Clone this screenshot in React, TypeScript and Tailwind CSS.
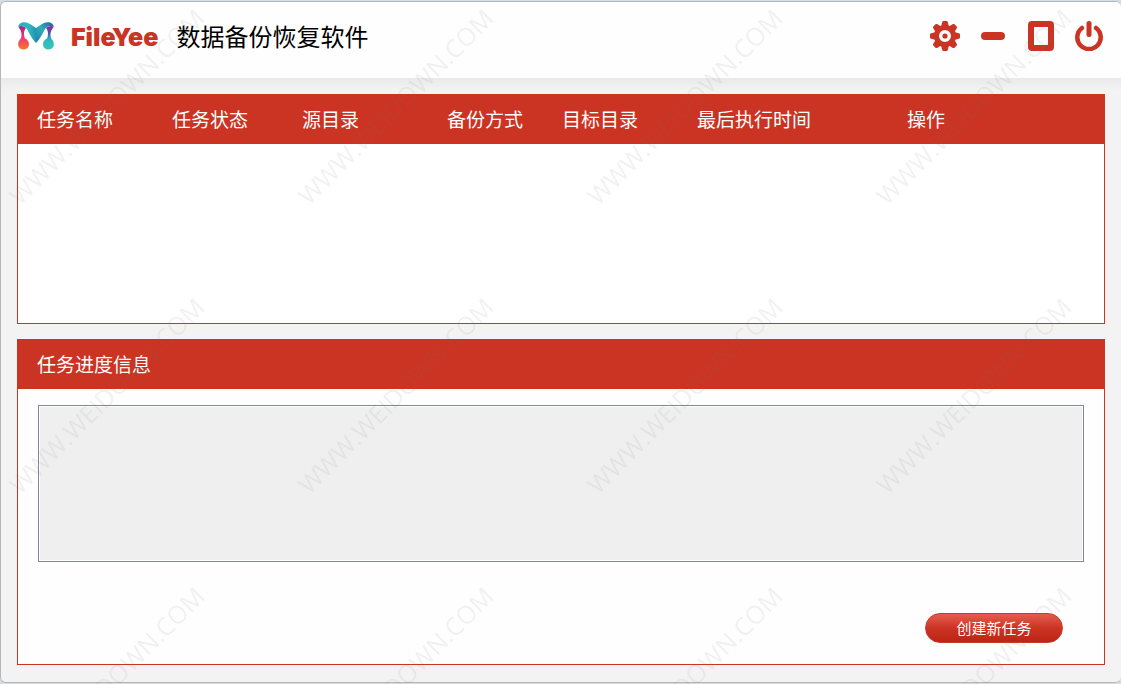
const columns = [
  { label: '任务名称', width: 'w-[135px]' },
  { label: '任务状态', width: 'w-[130px]' },
  { label: '源目录', width: 'w-[145px]' },
  { label: '备份方式', width: 'w-[115px]' },
  { label: '目标目录', width: 'w-[135px]' },
  { label: '最后执行时间', width: 'w-[210px]' },
  { label: '操作', width: '' },
];

function Logo() {
  return (
    <svg width="36" height="28" viewBox="0 0 36 28" aria-hidden="true">
      <defs>
        <linearGradient id="wing" x1="0" y1="0" x2="1" y2="0">
          <stop offset="0" stopColor="#22b3b4" />
          <stop offset="0.6" stopColor="#2cb9bd" />
          <stop offset="1" stopColor="#2793b4" />
        </linearGradient>
        <linearGradient id="fold" x1="0" y1="1" x2="1" y2="0">
          <stop offset="0" stopColor="#2379ad" />
          <stop offset="0.5" stopColor="#2cb0b9" />
          <stop offset="1" stopColor="#2456a4" />
        </linearGradient>
        <linearGradient id="dropLeft" x1="0" y1="0" x2="0" y2="1">
          <stop offset="0" stopColor="#a3228e" />
          <stop offset="0.5" stopColor="#ee3a72" />
          <stop offset="1" stopColor="#f7752b" />
        </linearGradient>
        <linearGradient id="dropRight" x1="0" y1="0" x2="0" y2="1">
          <stop offset="0" stopColor="#a3228e" />
          <stop offset="0.3" stopColor="#3c5ca8" />
          <stop offset="0.6" stopColor="#2cbabd" />
          <stop offset="1" stopColor="#36c6bd" />
        </linearGradient>
      </defs>
      <path d="M0.500 5C2 3 6 4 8 6C5.500 9 5.500 13 7 16.500C13 19 12 27.500 5.500 27.500C-1 27.500-1 20 2.500 17C4.500 13 3.500 9 0.500 5Z" fill="url(#dropLeft)" />
      <path d="M35.500 5C34 3 30 4 28 6C30.500 9 30.500 13 29 16.500C23 19 24 27.500 30.500 27.500C37 27.500 37 20 33.500 17C31.500 13 32.500 9 35.500 5Z" fill="url(#dropRight)" />
      <path d="M0 5C1 0 6-1 11 1.500C14 3 16.500 5 18 6V21C15 18 12 13 9.500 8C7.500 4.500 4 3 0 5Z" fill="url(#wing)" />
      <path d="M36 5C35 0 30-1 25 1.500C22 3 19.500 5 18 6V21C21 18 24 13 26.500 8C28.500 4.500 32 3 36 5Z" fill="url(#fold)" />
    </svg>
  );
}

function GearIcon() {
  return (
    <svg width="30" height="30" viewBox="0 0 30 30" fill="#cb3323" aria-hidden="true">
      {[0, 45, 90, 135, 180, 225, 270, 315].map((angle) => (
        <path key={angle} d="M11 6L12.200 1Q12.500 0 13.500 0H16.500Q17.500 0 17.800 1L19 6Z" transform={`rotate(${angle} 15 15)`} />
      ))}
      <circle cx="15" cy="15" r="8.500" fill="none" stroke="#cb3323" strokeWidth="5" />
      <circle cx="15" cy="15" r="2.600" />
    </svg>
  );
}

function MinimizeIcon() {
  return (
    <svg width="26" height="30" viewBox="0 0 26 30" fill="#cb3323" aria-hidden="true">
      <rect y="11" width="24" height="8" rx="4" />
    </svg>
  );
}

function MaximizeIcon() {
  return (
    <svg width="26" height="30" viewBox="0 0 26 30" aria-hidden="true">
      <path d="M4 0H22Q26 0 26 4V26Q26 30 22 30H4Q0 30 0 26V4Q0 0 4 0ZM6 6V24H20V6Z" fill="#cb3323" fillRule="evenodd" />
    </svg>
  );
}

function PowerIcon() {
  return (
    <svg width="28" height="30" viewBox="0 0 28 30" fill="none" stroke="#cb3323" strokeWidth="4.500" strokeLinecap="round" aria-hidden="true">
      <path d="M7 7A11.700 11.700 0 1 0 21 7" />
      <path d="M14 2.500V13.500" strokeWidth="5" />
    </svg>
  );
}

function Watermark() {
  return (
    <div className="pointer-events-none absolute inset-0 grid auto-rows-[289px] grid-cols-[repeat(4,289px)] overflow-hidden" aria-hidden="true">
      {Array.from({ length: 12 }, (_, i) => (
        <div key={i} className="flex size-[214px] items-center justify-center">
          <span className="-rotate-45 whitespace-nowrap font-['Open_Sans',sans-serif] text-[25px] text-neutral-500/10">
            WWW.WEIDOWN.COM
          </span>
        </div>
      ))}
    </div>
  );
}

export default function App() {
  return (
    <div className="relative flex min-h-screen flex-col overflow-hidden bg-[#d5dde2] pt-px pb-px font-['Noto_Sans_CJK_SC',sans-serif]">
      <div className="flex grow flex-col overflow-hidden rounded-md border border-r-0 border-[#b0b8bd] bg-[#f3f3f3]">
        <header className="flex h-[76px] shrink-0 items-center bg-[#fefefe] pr-[18px] pb-2 pl-[17px]">
          <Logo />
          <h1 className="ml-[17px] flex items-baseline gap-[18px] pt-1">
            <span className="font-['Inter',sans-serif] text-[25px] font-black text-[#cb3323]">
              FileYee
            </span>
            <span className="text-2xl text-black">数据备份恢复软件</span>
          </h1>
          <div className="ml-auto flex items-center gap-[21px]">
            <button type="button" aria-label="设置"><GearIcon /></button>
            <button type="button" aria-label="最小化"><MinimizeIcon /></button>
            <button type="button" aria-label="最大化"><MaximizeIcon /></button>
            <button type="button" aria-label="关闭"><PowerIcon /></button>
          </div>
        </header>

        <main className="flex grow flex-col gap-[15px] bg-linear-to-b from-[#e9e9e9] to-[#f3f3f3] to-[12px] px-4 pt-4 pb-[17px] text-[19px]">
          <section className="h-[230px] shrink-0 border border-[#cb3323] bg-white">
            <table className="w-full table-fixed">
              <thead className="bg-[#cb3323] text-left text-white">
                <tr className="h-[49px]">
                  {columns.map((column) => (
                    <th key={column.label} scope="col" className={`${column.width} pl-[19px] font-normal whitespace-nowrap`}>
                      {column.label}
                    </th>
                  ))}
                </tr>
              </thead>
            </table>
          </section>

          <section className="flex grow flex-col border border-[#cb3323] bg-[#fefefe]">
            <h2 className="flex h-[49px] items-center bg-[#cb3323] pl-[19px] text-white">
              <label htmlFor="progress">任务进度信息</label>
            </h2>
            <div className="flex grow flex-col px-5 pt-4 pb-[21px]">
              <textarea
                id="progress"
                readOnly
                className="min-h-[157px] grow resize-none border border-[#828790] bg-[#efefef] p-2 text-sm outline-1 -outline-offset-2 outline-white"
              />
              <button
                type="button"
                className="mt-[51px] mr-[21px] h-[30px] w-[138px] self-end rounded-full border border-[#c63b2c] bg-linear-to-b from-[#e65c4e] via-[#cb3323] to-[#bd2414] text-[15px] text-white"
              >
                创建新任务
              </button>
            </div>
          </section>
        </main>
      </div>
      <Watermark />
    </div>
  );
}
